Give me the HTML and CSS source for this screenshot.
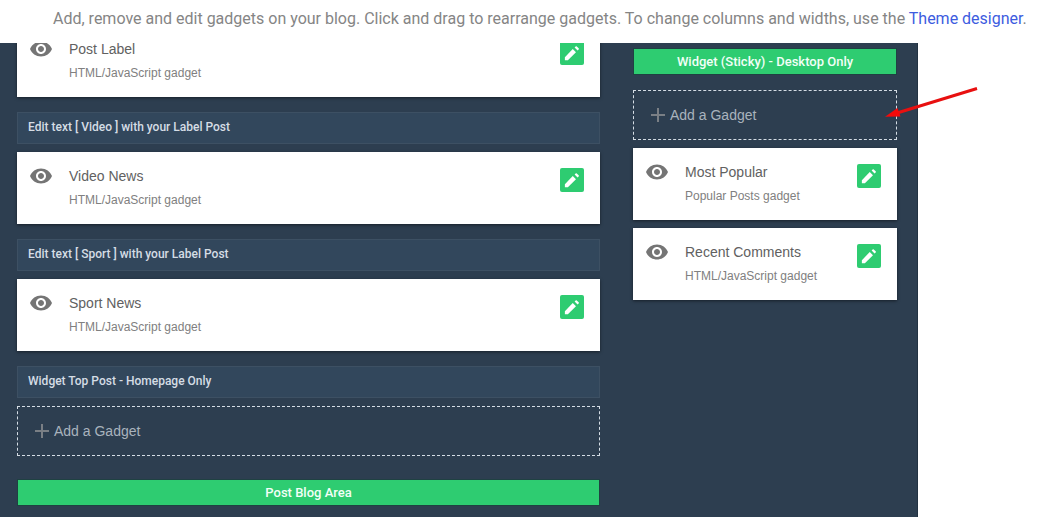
FILE: index.html
```html
<!DOCTYPE html>
<html lang="en">
<head>
  <meta charset="UTF-8">
  <title>Layout</title>
  <meta name="viewport" content="width=device-width, initial-scale=1.0">
  <link rel="stylesheet" href="styles.css">
</head>
<body>
  <!-- Shared icons -->
  <svg class="sprite" aria-hidden="true">
    <symbol id="icon-eye" viewBox="0 0 24 24">
      <path d="M12 4.5C7 4.5 2.73 7.61 1 12c1.73 4.39 6 7.5 11 7.5s9.27-3.11 11-7.5c-1.73-4.39-6-7.5-11-7.5zM12 17c-2.76 0-5-2.24-5-5s2.24-5 5-5 5 2.24 5 5-2.24 5-5 5zm0-8c-1.66 0-3 1.34-3 3s1.34 3 3 3 3-1.34 3-3-1.34-3-3-3z"/>
    </symbol>
    <symbol id="icon-edit" viewBox="0 0 24 24">
      <path d="M2.500 17.500V21.500H6.500L17.300 11L13 6.700zM20.900 7.200c.4-.4.4-1 0-1.400l-2.600-2.600c-.4-.4-1-.4-1.400 0l-1.400 1.500 3.900 3.900z"/>
    </symbol>
    <symbol id="icon-add" viewBox="0 0 14 14">
      <path d="M6 0h2v6h6v2H8v6H6V8H0V6h6z"/>
    </symbol>
  </svg>

  <header class="intro">
    <p>Add, remove and edit gadgets on your blog. Click and drag to rearrange gadgets. To change columns and widths, use the <a href="#">Theme designer</a>.</p>
  </header>

  <main class="layout">
    <!-- Main column -->
    <section class="column column-main">
      <div class="gadget">
        <svg class="eye"><use href="#icon-eye"/></svg>
        <div class="gadget-text">
          <h3>Post Label</h3>
          <p>HTML/JavaScript gadget</p>
        </div>
        <a class="edit" href="#" aria-label="Edit"><svg><use href="#icon-edit"/></svg></a>
      </div>

      <h2 class="label">Edit text [ Video ] with your Label Post</h2>
      <div class="gadget">
        <svg class="eye"><use href="#icon-eye"/></svg>
        <div class="gadget-text">
          <h3>Video News</h3>
          <p>HTML/JavaScript gadget</p>
        </div>
        <a class="edit" href="#" aria-label="Edit"><svg><use href="#icon-edit"/></svg></a>
      </div>

      <h2 class="label">Edit text [ Sport ] with your Label Post</h2>
      <div class="gadget">
        <svg class="eye"><use href="#icon-eye"/></svg>
        <div class="gadget-text">
          <h3>Sport News</h3>
          <p>HTML/JavaScript gadget</p>
        </div>
        <a class="edit" href="#" aria-label="Edit"><svg><use href="#icon-edit"/></svg></a>
      </div>

      <h2 class="label">Widget Top Post - Homepage Only</h2>
      <a class="add" href="#"><svg><use href="#icon-add"/></svg>Add a Gadget</a>

      <h2 class="area area-blog">Post Blog Area</h2>
    </section>

    <!-- Sidebar -->
    <aside class="column column-side">
      <h2 class="area area-sticky">Widget (Sticky) - Desktop Only</h2>
      <a class="add" href="#"><svg><use href="#icon-add"/></svg>Add a Gadget</a>
      <div class="gadget">
        <svg class="eye"><use href="#icon-eye"/></svg>
        <div class="gadget-text">
          <h3>Most Popular</h3>
          <p>Popular Posts gadget</p>
        </div>
        <a class="edit" href="#" aria-label="Edit"><svg><use href="#icon-edit"/></svg></a>
      </div>
      <div class="gadget">
        <svg class="eye"><use href="#icon-eye"/></svg>
        <div class="gadget-text">
          <h3>Recent Comments</h3>
          <p>HTML/JavaScript gadget</p>
        </div>
        <a class="edit" href="#" aria-label="Edit"><svg><use href="#icon-edit"/></svg></a>
      </div>
    </aside>
  </main>

  <!-- Arrow pointing at the sidebar slot -->
  <svg class="arrow" viewBox="0 0 100 36" aria-hidden="true">
    <path class="arrow-line" d="M96 5.500L16 30"/>
    <path class="arrow-head" d="M4 33.700L16.500 25L19.500 33.500z"/>
  </svg>
</body>
</html>
```

FILE: styles.css
```css
/* Reset */
* { margin: 0; padding: 0; box-sizing: border-box; }

:root {
  --panel: #2d3e50;
  --label: #32475c;
  --green: #2ecc71;
}

body {
  height: 100vh;
  overflow: hidden;
  background: #fff;
  font-family: "Liberation Sans", Arial, sans-serif;
}

a { text-decoration: none; }

.sprite { display: none; }

/* Intro text */
.intro {
  height: 43px;
  padding: 8px 0 0 53px;
  font: 400 16px/21px Roboto, sans-serif;
  color: #858585;
  white-space: nowrap;
}

.intro a { color: #3d5ce0; }

/* Layout panel */
.layout {
  display: flex;
  align-items: flex-start;
  gap: 33px;
  width: 918px;
  height: calc(100vh - 43px);
  padding-left: 17px;
  border-right: 1px solid #223242;
  overflow: hidden;
  background: var(--panel);
}

.column {
  display: flex;
  flex-direction: column;
  flex-shrink: 0;
  gap: 8px;
}

/* the first gadget is scrolled partly under the intro */
.column-main {
  width: 583px;
  margin-top: -18px;
}

.column-side {
  width: 264px;
  margin-top: 5px;
}

/* Section names */
.label {
  height: 32px;
  margin-top: 7px;
  padding-left: 10px;
  border: 1px solid #3d5063;
  background: var(--label);
  color: #d5dde5;
  font: 500 12px/28px Roboto, sans-serif;
}

.area {
  height: 27px;
  border: 1px solid #1f4142;
  background: var(--green);
  color: #f2fff7;
  font: 500 13px/25px Roboto, sans-serif;
  text-align: center;
}

.area-blog { margin-top: 15px; }
.area-sticky { margin-bottom: 7px; }

/* Gadgets */
.gadget {
  display: flex;
  height: 72px;
  padding: 12px 16px 0 12px;
  background: #fff;
  box-shadow: 0 1px 3px rgba(0, 0, 0, 0.5);
}

.eye {
  width: 24px;
  height: 24px;
  fill: #757575;
}

.gadget-text {
  flex: 1;
  padding-left: 16px;
}

.gadget-text h3 {
  font-size: 14px;
  font-weight: 400;
  line-height: 24px;
  color: #616161;
}

.gadget-text p {
  font-size: 12px;
  line-height: 24px;
  color: #808080;
}

.edit {
  display: flex;
  align-items: center;
  justify-content: center;
  width: 24px;
  height: 24px;
  margin-top: 4px;
  border-radius: 2px;
  background: var(--green);
}

.edit svg {
  width: 18px;
  height: 18px;
  fill: #fff;
}

/* Empty slot */
.add {
  display: flex;
  align-items: center;
  gap: 5px;
  height: 50px;
  padding-left: 17px;
  border: 1px dashed #d5dde5;
  color: #a9b3bd;
  font-size: 14px;
}

.add svg {
  width: 14px;
  height: 14px;
  fill: #7a7f85;
}

/* Arrow */
.arrow {
  position: absolute;
  left: 881px;
  top: 83px;
  width: 100px;
  height: 36px;
}

.arrow-line {
  fill: none;
  stroke: #e81010;
  stroke-width: 3;
}

.arrow-head { fill: #f50a0a; }
```
